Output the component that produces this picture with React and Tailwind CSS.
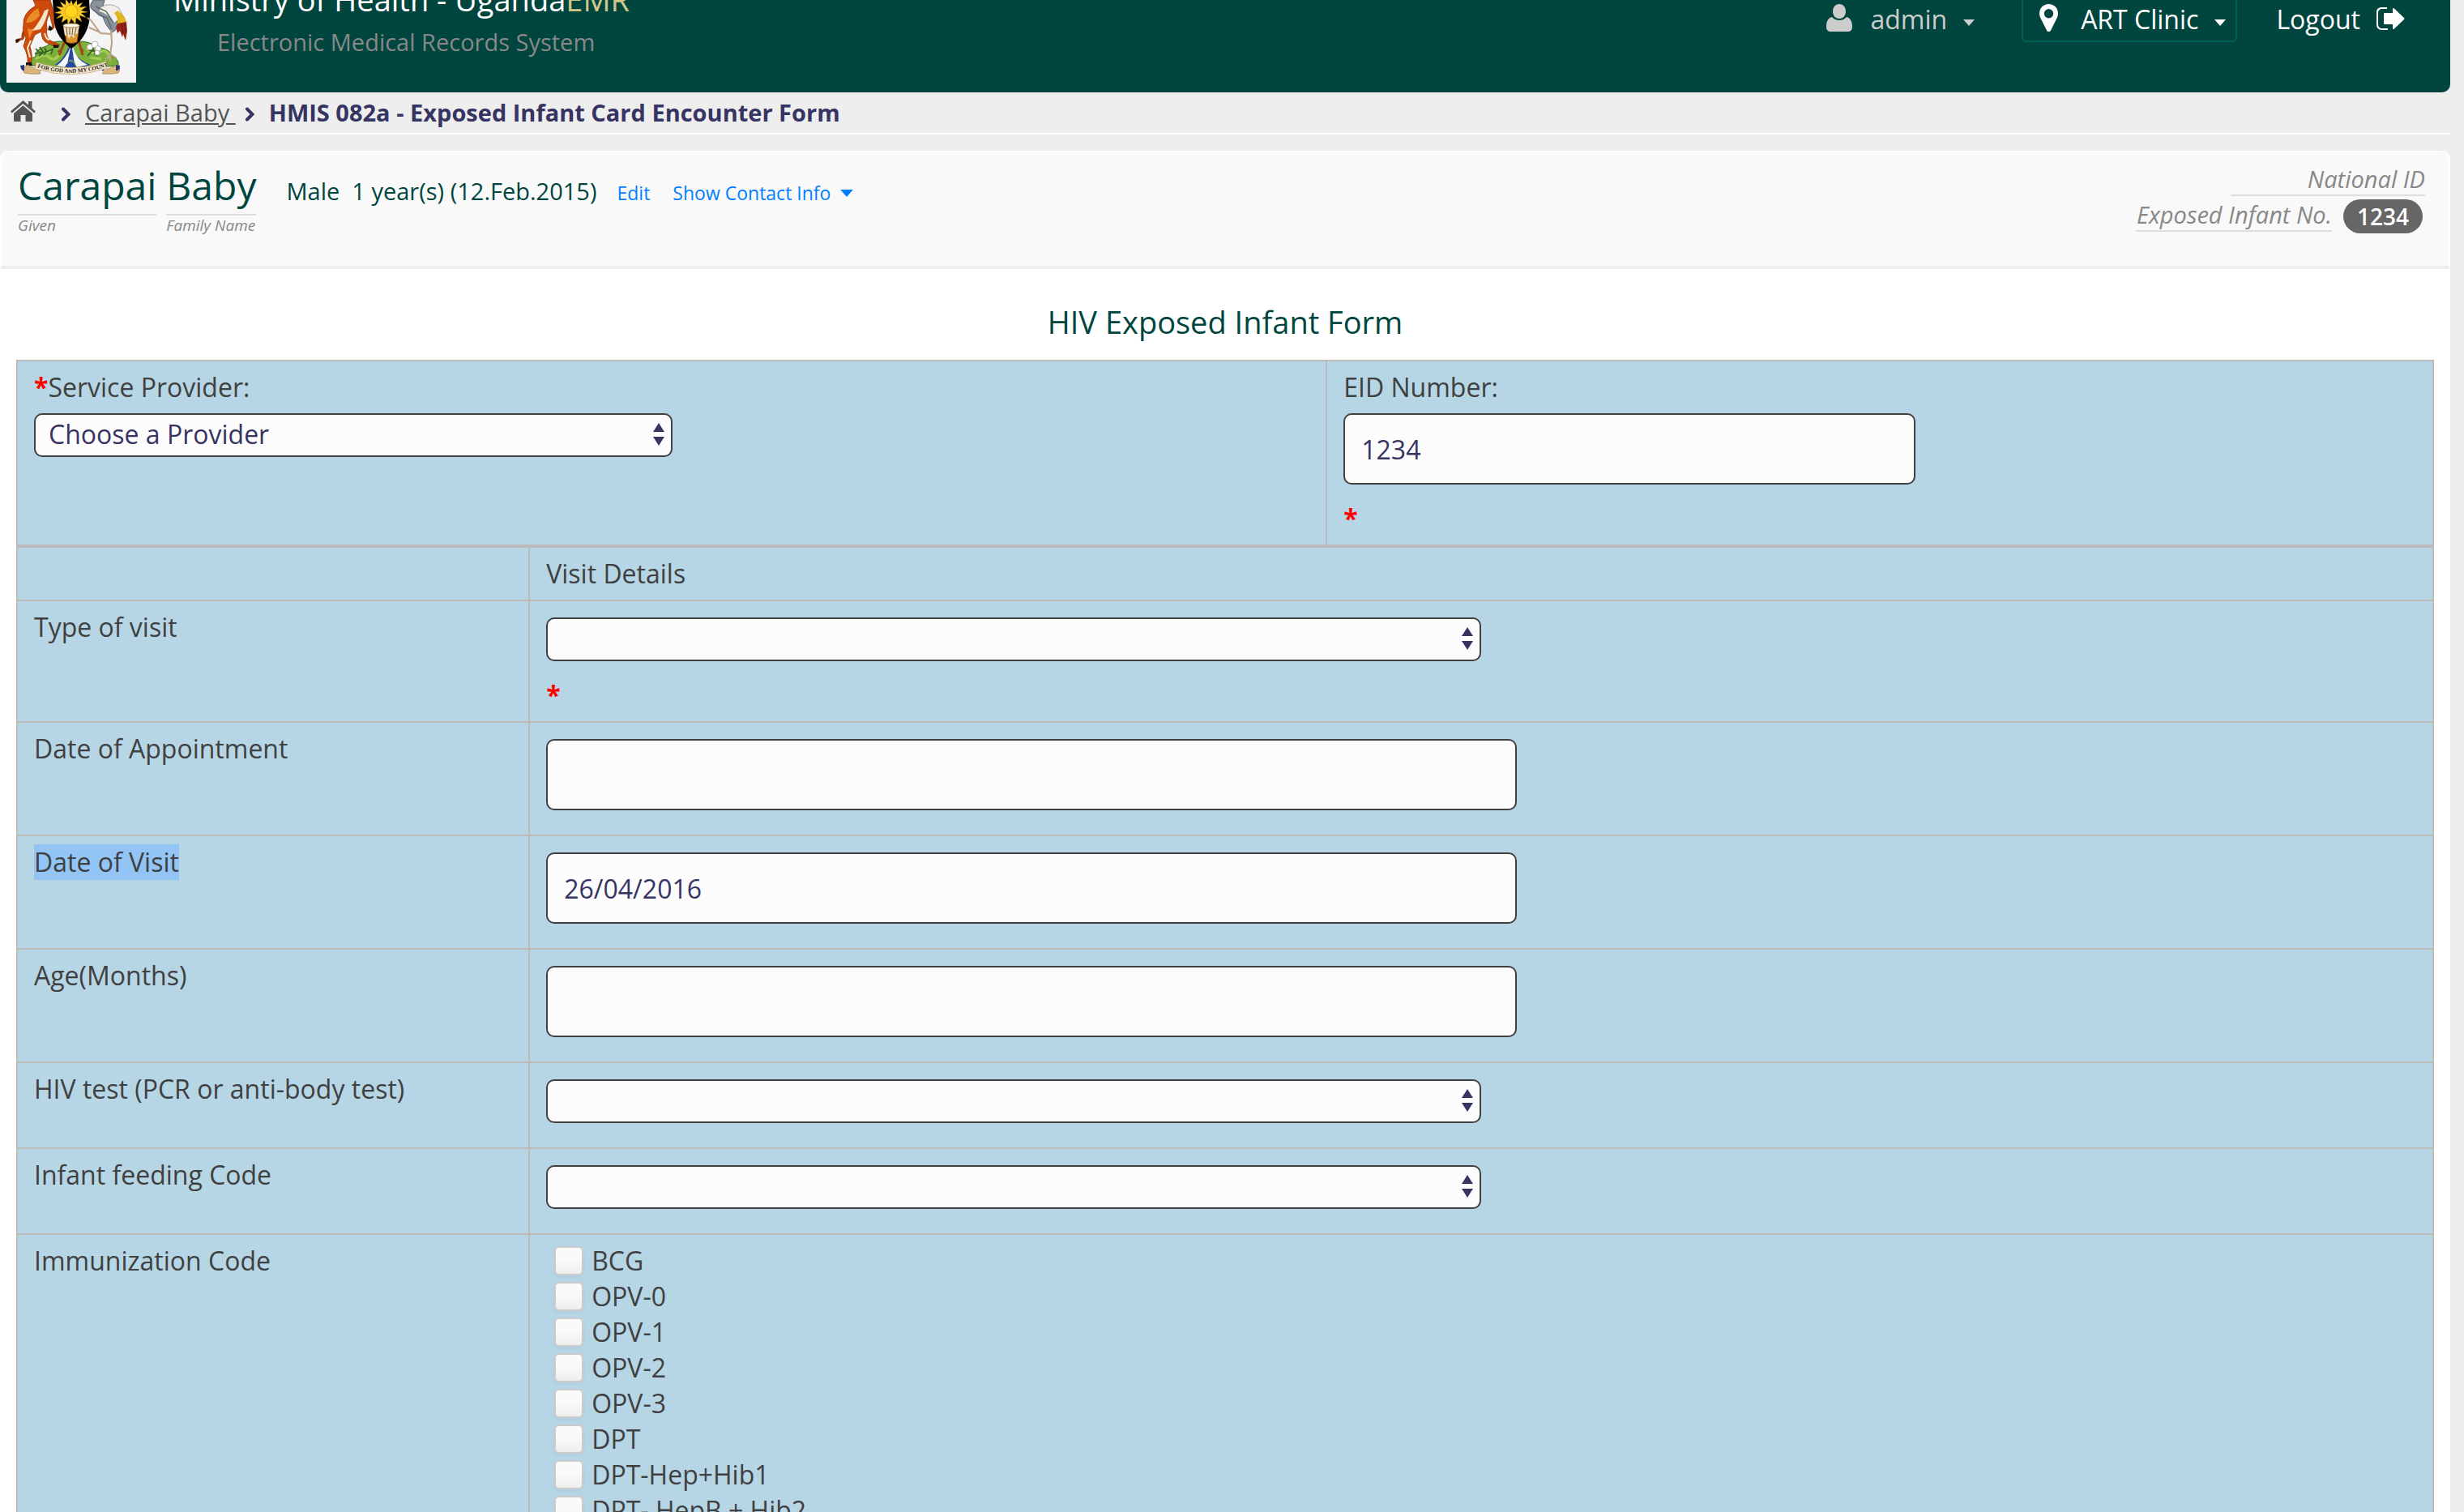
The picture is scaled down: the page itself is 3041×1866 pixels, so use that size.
const FIELD =
  "block border-2 border-[#404040] rounded-[10px] bg-[#fcfcfc] text-[#363463] text-[32px]";

function Arrows() {
  return (
    <svg viewBox="0 0 14 28" className="pointer-events-none absolute right-[10px] top-[12px] h-[28px] w-[14px]" fill="#363463" aria-hidden="true">
      <path d="M7 0l7 11H0zM0 17h14l-7 11z" />
    </svg>
  );
}

function Select({ id, width, children }) {
  return (
    <div className={"relative " + width}>
      <select id={id} className={FIELD + " h-[54px] w-full appearance-none px-[16px] pb-[2px] leading-[48px]"}>
        {children}
      </select>
      <Arrows />
    </div>
  );
}

function Caret({ size = "h-[8px] w-[14px]", className = "" }) {
  return (
    <svg viewBox="0 0 14 8" className={size + " " + className} fill="currentColor" aria-hidden="true">
      <path d="M0 0h14L7 8z" />
    </svg>
  );
}

function Emblem() {
  return (
    <svg viewBox="0 0 160 102" className="ml-[8px] h-[102px] w-[160px] shrink-0" role="img" aria-label="Coat of arms of Uganda">
      <defs>
        <path id="motto" d="M37 83Q80 97 124 82" />
      </defs>
      <rect width="160" height="102" fill="#f4f4f5" />
      <path d="M27 80Q27 72 36 70Q34 61 49 57Q57 50 70 51L79 53L93 51Q108 53 115 59Q129 61 130 70Q139 72 138 81Q110 84 80 83Q48 84 27 80z" fill="#7db03b" stroke="#3c6b25" strokeWidth="1" />
      <path d="M36 73q10-8 17-2t13-5M99 60q9 9 17 4t12 9M47 65l10-4M103 71l14 2M60 72l9-8" stroke="#a6cc52" strokeWidth="3" fill="none" />
      <path d="M35 66q15-1 23-6M36 60l5 5M41 58l4 6M47 59l2 4M40 69l5-4M46 68l4-5M55 67l2-6M100 69q6-6 9-14M101 62l6 1M108 67l6-5M112 69q-4-7-7-9" stroke="#356025" strokeWidth="1.7" fill="none" />
      <path d="M77 58Q70 74 60 80L67 82Q75 74 77 65Q80 75 93 83L104 80Q85 73 81 58z" fill="#2546a5" />
      <path d="M79 58Q73 73 62 81L73 83Q78 72 80 72Q82 72 87 83L100 80Q86 74 82 58z" fill="#f5f6fc" />
      <path d="M79 59L75 79Q80 68 84 80L81 59zM72 83Q79 68 86 83z" fill="#2948a4" />
      <path d="M72 51L65 68M89 50L94 68M64 62l4 4M91 63l4-1" stroke="#9e4718" strokeWidth="3" />
      <path d="M57 0L58 16Q57 43 80 60Q103 44 103 16L102 0z" fill="#050302" />
      <path d="M80 0l2 6 5-6 0 6 7-3-4 6 9-1-7 5 9 2-9 1 7 6-9-3 3 8-7-5-1 8-5-7-4 8-1-8-7 5 2-8-9 3 7-6-9-1 9-3-7-5 9 1-4-7 7 4 0-7 5 6z" fill="#f7c926" />
      <circle cx="80" cy="14" r="8" fill="#ffd51e" stroke="#d69b11" strokeWidth=".8" />
      <path d="M72 39h17l-2 13q-7 3-13 0z" fill="#df952d" stroke="#8a5218" />
      <path d="M70 32q10-4 20 0l-2 9-3 2-2 4-3-4-3 5-2-5-3 1z" fill="#efe1c2" />
      <path d="M74 34l1 9M78 33v10M82 33l-1 10M86 34l-2 10" stroke="#755327" strokeWidth="1" />
      <ellipse cx="80" cy="31.500" rx="10" ry="2.500" fill="#fffbea" stroke="#b48b52" />
      <g stroke="#923010" strokeWidth=".8" strokeLinejoin="round">
        <path d="M24 34Q18 39 19 47L15 48Q10 48 12 53Q16 51 18 49Q22 50 22 43Q24 35 30 31z" fill="#c3420d" />
        <path d="M33 0L36 7Q20 16 21 30Q19 39 24 47L21 57Q27 69 26 76L30 79Q33 70 29 57L35 43L43 39Q43 52 53 54L62 59L65 55L54 50Q48 45 50 35Q48 27 53 17L57 33L53 34L56 37L59 34L58 14L54 0z" fill="#cf4b0b" />
      </g>
      <path d="M39 10Q27 17 24 28Q34 29 41 19zM26 35q5 2 8 0l-6 13z" fill="#e98b28" />
      <path d="M47 13Q43 24 32 38L42 36Q49 26 52 11z" fill="#f5e5c9" />
      <path d="M47 41q2 8 6 8M30 50l-4 9 3 12" fill="none" stroke="#f5e5c9" strokeWidth="2" />
      <path d="M24 77l7 0 1 4-8 1zM58 55l7 1-1 3-6 0zM53 31l4 4-2 3-4-1zM11 49l6-1-4 5z" fill="#191312" />
      <path d="M107 0Q101 8 106 12L118 19Q122 31 130 40Q138 37 137 27Q129 13 119 8L121 0z" fill="#87929a" stroke="#596269" strokeWidth="1" />
      <path d="M116 9Q128 2 139 10L144 20L132 29Q128 18 114 14z" fill="#f0eee8" stroke="#777" strokeWidth=".6" />
      <path d="M137 13Q149 20 148 31L136 31Q139 23 133 16z" fill="#dfb51f" />
      <path d="M137 29L148 27L149 38L147 50L144 42L143 46L140 38L137 41L135 34z" fill="#9a2317" />
      <path d="M142 29l2 12M146 29l1 12" stroke="#4d2016" strokeWidth="1" />
      <path d="M129 37L130 53L128 67L122 74M128 67l8 5M128 68v8M130 42L116 41L104 25L100 22M116 40L102 34" fill="none" stroke="#b9a288" strokeWidth="2" />
      <path d="M107 12L115 19L124 22L130 36M110 8l13 6 9 14" fill="none" stroke="#5e6971" strokeWidth="1.5" />
      <g fill="#fff" stroke="#a8aaa4" strokeWidth=".8">
        <circle cx="103" cy="58" r="3.500" />
        <circle cx="109" cy="55" r="4" />
        <circle cx="113" cy="60" r="3.500" />
        <circle cx="112" cy="65" r="3" />
      </g>
      <path d="M26 80L40 87L42 91Q30 92 22 90Q18 84 26 80zM137 80L121 87L118 91Q130 92 138 90Q142 84 137 80z" fill="#ddb47c" stroke="#a67b48" strokeWidth=".7" />
      <path d="M17 81L22 80V87Q18 88 17 81zM37 83l8 2-3 3zM140 81l-5-1v7q5 1 5-6zM123 83l-7 2 3 3z" fill="#26387b" />
      <path d="M37 77Q80 91 123 76L125 84Q81 99 35 85z" fill="#f4e5cb" stroke="#c3a477" strokeWidth=".7" />
      <text fontFamily="Liberation Serif, serif" fontSize="7" fontWeight="700" fill="#272522">
        <textPath href="#motto" startOffset="1">FOR GOD AND MY COUNTRY</textPath>
      </text>
    </svg>
  );
}

function Header() {
  return (
    <header className="flex h-[114px] items-end overflow-hidden rounded-b-[10px] bg-[#00463f] text-white">
      <div className="flex grow items-end self-end pb-[12px]">
        <Emblem />
        <div className="ml-[46px] pb-[30px]">
          <div className="text-[38px] leading-[48px]">
            Ministry of Health - Uganda<span className="text-[#d0c788]">EMR</span>
          </div>
          <div className="mt-[9px] pl-[54px] text-[29px] leading-[40px] text-[#888]">Electronic Medical Records System</div>
        </div>
      </div>
      <nav className="flex items-start self-start pr-[56px] text-[32px] leading-[48px]">
        <button type="button" className="flex h-[48px] items-center text-[#ccc]">
          <svg viewBox="0 0 32 34" className="mb-[4px] h-[34px] w-[32px]" fill="currentColor" aria-hidden="true">
            <path d="M16 0c5 0 8 4 8 9s-3 9-8 9-8-4-8-9 3-9 8-9zM7 16c3 3 6 4 9 4s6-1 9-4c5 1 7 6 7 12 0 4-2 6-6 6H6c-4 0-6-2-6-6 0-6 2-11 7-12z" />
          </svg>
          <span className="ml-[22px]">admin</span>
          <Caret className="ml-[20px] mt-[8px]" />
        </button>
        <button type="button" className="ml-[58px] flex h-[52px] items-center rounded-b-[6px] border-2 border-t-0 border-[#006055] pb-[2px] pl-[20px] pr-[12px]">
          <svg viewBox="0 0 23 34" className="mb-[4px] h-[34px] w-[23px]" fill="currentColor" fillRule="evenodd" aria-hidden="true">
            <path d="M11.500 0C18 0 23 5 23 11.500c0 2-.4 3.500-1 5L14 32.500c-1 2-4 2-5 0L1 16.500c-.6-1.500-1-3-1-5C0 5 5 0 11.500 0zm0 6a5.700 5.700 0 100 11.400 5.700 5.700 0 000-11.400z" />
          </svg>
          <span className="ml-[28px]">ART Clinic</span>
          <Caret className="ml-[20px] mt-[8px]" />
        </button>
        <a href="#logout" className="ml-[48px] flex h-[48px] items-center">
          Logout
          <svg viewBox="0 0 35 28" className="mb-[2px] ml-[20px] h-[28px] w-[35px]" fill="currentColor" aria-hidden="true">
            <path d="M13 0v2H7C4 2 2 4 2 7v14c0 3 2 5 5 5h7v2H7c-5 0-7-3-7-7V7c0-5 2-7 7-7z" />
            <path d="M21 2l12.500 12L21 26v-6H10V8h11z" stroke="currentColor" strokeWidth="2" strokeLinejoin="round" />
          </svg>
        </a>
      </nav>
    </header>
  );
}

function Chevron({ className }) {
  return (
    <svg viewBox="0 0 12 18" className={"mt-[4px] h-[18px] w-[12px] " + className} fill="none" stroke="#363463" strokeWidth="4" strokeLinecap="round" aria-hidden="true">
      <path d="M3 2.500L9.500 9 3 15.500" />
    </svg>
  );
}

function Breadcrumbs() {
  return (
    <nav aria-label="Breadcrumb" className="flex h-[52px] items-center border-b-2 border-white pl-[13px] text-[29px] leading-[40px]">
      <a href="#home" aria-label="Home" className="mb-[4px] text-[#555]">
        <svg viewBox="0 0 31 26" className="h-[26px] w-[31px]" fill="currentColor" aria-hidden="true">
          <path d="M15.500 0l6.500 5.500V1h4.500v8.500L31 13.500l-1.800 2L15.500 4 1.800 15.500l-1.800-2zM15.500 6.300L27 16v9q0 1-1 1h-7.500v-8h-6v8H5q-1 0-1-1v-9z" />
        </svg>
      </a>
      <Chevron className="ml-[31px]" />
      <a href="#patient" className="ml-[18px] whitespace-pre text-[#555] underline">Carapai Baby </a>
      <Chevron className="ml-[11px]" />
      <span className="ml-[18px] font-bold text-[#363463]">HMIS 082a - Exposed Infant Card Encounter Form</span>
    </nav>
  );
}

function NamePart({ name, label }) {
  return (
    <div>
      <div className="border-b-2 border-[#ddd] pb-[4px] text-[48px] leading-[62px] text-[#00463f]">{name}</div>
      <div className="text-[19px] italic leading-[24px] text-[#888]">{label}</div>
    </div>
  );
}

function PatientHeader() {
  return (
    <section className="flex justify-between rounded-t-[10px] border-2 border-b-4 border-white border-b-[#eee] bg-[#f9f9f9] pb-[38px] pl-[20px] pr-[29px] pt-[10px]">
      <div className="flex items-start">
        <div className="flex gap-[12px]">
          <NamePart name="Carapai" label="Given" />
          <NamePart name="Baby" label="Family Name" />
        </div>
        <div className="ml-[37px] flex items-baseline pt-[18px] text-[23px] text-[#007fff]">
          <span className="whitespace-pre text-[29px] leading-[40px] text-[#00463f]">Male  1 year(s) (12.Feb.2015)</span>
          <a href="#edit" className="ml-[25px]">Edit</a>
          <button type="button" className="ml-[28px] flex items-center gap-[12px]">
            Show Contact Info
            <Caret size="h-[9px] w-[16px]" />
          </button>
        </div>
      </div>
      <dl className="flex flex-col items-end text-[29px] italic text-[#888]">
        <div className="flex h-[44px]">
          <dt className="h-[44px] w-[240px] border-b-2 border-[#ddd] text-right leading-[46px]">National ID</dt>
        </div>
        <div className="flex h-[44px] items-start gap-[14px] pr-[3px]">
          <dt className="h-[44px] border-b-2 border-[#ddd] pl-[1px] leading-[46px]">Exposed Infant No.</dt>
          <dd className="mt-[4px] h-[42px] rounded-full bg-[#666] px-[17px] text-[28px] font-semibold not-italic leading-[42px] text-white">1234</dd>
        </div>
      </dl>
    </section>
  );
}

const Star = () => <span className="font-bold text-[#f00]">*</span>;

const VACCINES = ["BCG", "OPV-0", "OPV-1", "OPV-2", "OPV-3", "DPT", "DPT-Hep+Hib1", "DPT- HepB + Hib2"];

const CELL = "border-2 border-[#bbb] px-[20px] text-left align-top font-normal";

function Row({ id, label, height, children, selected }) {
  return (
    <tr className={height}>
      <th scope="row" className={CELL + " pt-[10px]"}>
        <label htmlFor={id} className={selected ? "inline-block bg-[#92c5f5]" : "inline-block"}>{label}</label>
      </th>
      <td className={CELL + " pt-[20px]"}>{children}</td>
    </tr>
  );
}

function TextField({ id, value, width }) {
  return <input id={id} type="text" defaultValue={value} className={FIELD + " h-[88px] px-[20px] leading-[44px] " + width} />;
}

export default function App() {
  return (
    <div className="h-screen overflow-hidden bg-[#eee] pr-[17px] font-['Open_Sans',sans-serif]">
      <Header />
      <Breadcrumbs />
      <main className="mt-[20px]">
        <PatientHeader />
        <form className="bg-white px-[20px] pt-[39px] text-[32px] leading-[44px] text-[#404040]">
          <h1 className="mb-[21px] text-center text-[38px] leading-[52px] text-[#00463f]">HIV Exposed Infant Form</h1>
          <table className="w-full table-fixed border-collapse bg-[#b6d6e6]">
            <colgroup>
              <col className="w-[54.2%]" />
              <col />
            </colgroup>
            <tbody>
              <tr className="h-[228px]">
                <td className={CELL + " pt-[10px]"}>
                  <label htmlFor="provider" className="block"><Star />Service Provider:</label>
                  <div className="mt-[10px]">
                    <Select id="provider" width="w-[788px]">
                      <option>Choose a Provider</option>
                    </Select>
                  </div>
                </td>
                <td className={CELL + " pt-[10px]"}>
                  <label htmlFor="eid" className="mb-[10px] block">EID Number:</label>
                  <TextField id="eid" value="1234" width="w-[706px]" />
                  <div className="mt-[20px]"><Star /></div>
                </td>
              </tr>
            </tbody>
          </table>
          <table className="w-full table-fixed border-collapse bg-[#b6d6e6]">
            <colgroup>
              <col className="w-[21.2%]" />
              <col />
            </colgroup>
            <tbody>
              <tr className="h-[66px]">
                <td className={CELL} />
                <th scope="col" className={CELL + " pt-[10px]"}>Visit Details</th>
              </tr>
              <Row id="visit-type" label="Type of visit" height="h-[150px]">
                <Select id="visit-type" width="w-[1154px]"><option /></Select>
                <div className="mt-[20px]"><Star /></div>
              </Row>
              <Row id="appointment" label="Date of Appointment" height="h-[140px]">
                <TextField id="appointment" value="" width="w-[1198px]" />
              </Row>
              <Row id="visit-date" label="Date of Visit" height="h-[140px]" selected>
                <TextField id="visit-date" value="26/04/2016" width="w-[1198px]" />
              </Row>
              <Row id="age" label="Age(Months)" height="h-[140px]">
                <TextField id="age" value="" width="w-[1198px]" />
              </Row>
              <Row id="hiv-test" label="HIV test (PCR or anti-body test)" height="h-[106px]">
                <Select id="hiv-test" width="w-[1154px]"><option /></Select>
              </Row>
              <Row id="feeding" label="Infant feeding Code" height="h-[106px]">
                <Select id="feeding" width="w-[1154px]"><option /></Select>
              </Row>
              <tr>
                <th scope="row" className={CELL + " pt-[10px]"}>Immunization Code</th>
                <td className={CELL + " pt-[10px]"}>
                  {VACCINES.map((name) => (
                    <label key={name} className="flex h-[44px] items-center gap-[10px] pl-[10px]">
                      <input
                        type="checkbox"
                        className="h-[36px] w-[36px] appearance-none rounded-[6px] border-2 border-[#ccc] bg-linear-to-b from-[#fafafa] from-40% to-[#eee] shadow-[0_2px_4px_rgba(0,0,0,0.05)]"
                      />
                      {name}
                    </label>
                  ))}
                </td>
              </tr>
            </tbody>
          </table>
        </form>
      </main>
    </div>
  );
}
